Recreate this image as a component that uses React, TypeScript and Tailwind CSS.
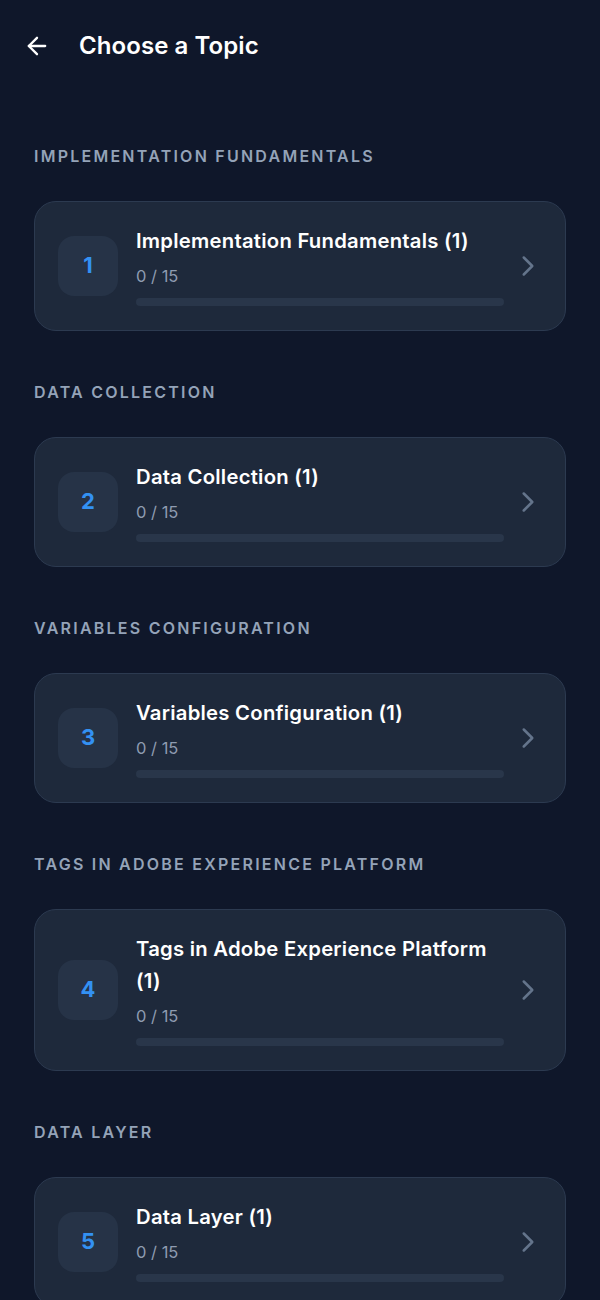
import { ArrowLeft, ChevronRight } from "lucide-react";

type Topic = {
  id: number;
  section: string;
  title: string;
  done: number;
  total: number;
};

const topics: Topic[] = [
  { id: 1, section: "Implementation Fundamentals", title: "Implementation Fundamentals (1)", done: 0, total: 15 },
  { id: 2, section: "Data Collection", title: "Data Collection (1)", done: 0, total: 15 },
  { id: 3, section: "Variables Configuration", title: "Variables Configuration (1)", done: 0, total: 15 },
  { id: 4, section: "Tags in Adobe Experience Platform", title: "Tags in Adobe Experience Platform (1)", done: 0, total: 15 },
  { id: 5, section: "Data Layer", title: "Data Layer (1)", done: 0, total: 15 },
];

export default function App() {
  return (
    <main
      className="min-h-screen bg-[#0f172a] text-white"
      style={{ fontFamily: "Inter, 'Noto Sans', sans-serif" }}
    >
      <header className="flex h-[92px] items-center pl-[23px] pr-6">
        <ArrowLeft className="h-[28px] w-[28px] text-white" strokeWidth={2} />
        <h1 className="ml-[28px] text-[24px] font-semibold tracking-[0.003em]">Choose a Topic</h1>
      </header>

      <div className="px-[34px] pt-[54px]">
        {topics.map((topic) => (
          <section key={topic.id} className="mb-[51px]">
            <h2 className="text-[16px] font-semibold uppercase leading-5 tracking-[0.14em] text-[#94a3b8]">
              {topic.section}
            </h2>

            <div className="mt-[35px] flex items-center rounded-[22px] border border-[#2c3a50] bg-[#1e293b] pt-[23px] pb-[24px] pl-[23px] pr-[20px]">
              <div className="flex h-[60px] w-[60px] shrink-0 items-center justify-center rounded-2xl bg-[#263347]">
                <span className="text-[22px] font-bold text-[#3391f3]">{topic.id}</span>
              </div>

              <div className="ml-[18px] min-w-0 flex-1">
                <p className="text-[20.3px] font-semibold leading-8 tracking-[0.012em]">{topic.title}</p>
                <p className="mt-[7px] text-[16.5px] leading-6 text-[#8e9bb0]">
                  {topic.done} / {topic.total}
                </p>
                <div className="mt-[10px] h-2 w-full rounded-full bg-[#29364a]">
                  <div
                    className="h-2 rounded-full bg-[#3391f3]"
                    style={{ width: `${(topic.done / topic.total) * 100}%` }}
                  />
                </div>
              </div>

              <ChevronRight className="ml-[7px] h-[34px] w-[34px] shrink-0 text-[#64748b]" strokeWidth={1.8} />
            </div>
          </section>
        ))}
      </div>
    </main>
  );
}
